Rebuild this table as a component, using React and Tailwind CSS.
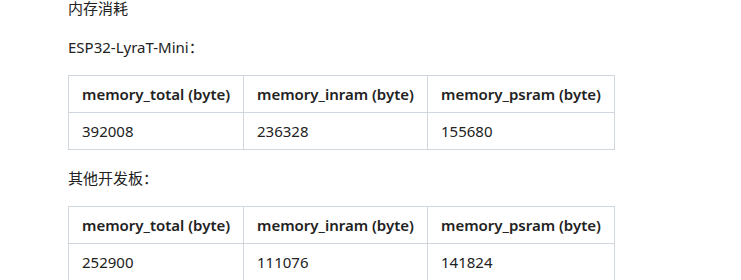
const tables = [
  { title: 'ESP32-LyraT-Mini：', row: ['392008', '236328', '155680'] },
  { title: '其他开发板：', row: ['252900', '111076', '141824'] },
];

const heads = ['memory_total (byte)', 'memory_inram (byte)', 'memory_psram (byte)'];

function MemTable({ row }) {
  return (
    <table className="table-fixed border-collapse w-[546px] text-[#222]">
      <colgroup>
        <col className="w-[175px]" />
        <col className="w-[184px]" />
        <col className="w-[187px]" />
      </colgroup>
      <thead>
        <tr>
          {heads.map((h) => (
            <th key={h} className="border border-[#d0d7de] px-[13px] py-[6px] text-left font-semibold leading-6 whitespace-nowrap">
              {h}
            </th>
          ))}
        </tr>
      </thead>
      <tbody>
        <tr>
          {row.map((v, i) => (
            <td key={i} className="border border-[#d0d7de] px-[13px] py-[6px] leading-6">
              {v}
            </td>
          ))}
        </tr>
      </tbody>
    </table>
  );
}

export default function App() {
  return (
    <div className="w-[741px] h-[280px] overflow-hidden bg-white pl-[68px] text-[15px] text-[#222] font-['Noto_Sans','Noto_Sans_CJK_SC',sans-serif]">
      <p className="leading-6 -mt-[4px]">内存消耗</p>
      <p className="leading-6 mt-[15px]">{tables[0].title}</p>
      <div className="mt-4">
        <MemTable row={tables[0].row} />
      </div>
      <p className="leading-6 mt-4">{tables[1].title}</p>
      <div className="mt-4">
        <MemTable row={tables[1].row} />
      </div>
    </div>
  );
}
